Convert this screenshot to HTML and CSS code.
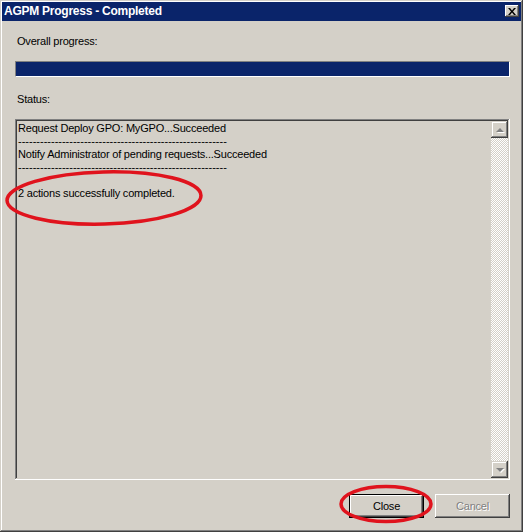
FILE: index.html
```html
<!DOCTYPE html>
<html lang="en">
<head>
    <meta charset="UTF-8">
    <title>AGPM Progress - Completed</title>
    <link rel="stylesheet" href="styles.css">
</head>
<body>
    <div class="window">
        <div class="titlebar">
            <span class="title">AGPM Progress - Completed</span>
            <button class="title-close" title="Close">
                <svg width="8" height="7" viewBox="0 0 8 7">
                    <path d="M0 0h2l2 2.5L6 0h2L5 3.5 8 7H6L4 4.5 2 7H0l3-3.5z" fill="#000"/>
                </svg>
            </button>
        </div>

        <div class="content">
            <div class="label">Overall progress:</div>
            <div class="progress">
                <div class="progress-fill" style="width: 100%"></div>
            </div>

            <div class="label status-label">Status:</div>
            <div class="status-box">
                <div class="status-text">
                    <div>Request Deploy GPO: MyGPO...Succeeded</div>
                    <div class="rule">---------------------------------------------------------</div>
                    <div>Notify Administrator of pending requests...Succeeded</div>
                    <div class="rule">---------------------------------------------------------</div>
                    <div>&nbsp;</div>
                    <div>2 actions successfully completed.</div>
                </div>
                <div class="scrollbar">
                    <div class="scroll-btn"><span class="arrow arrow-up"></span></div>
                    <div class="scroll-track"></div>
                    <div class="scroll-btn"><span class="arrow arrow-down"></span></div>
                </div>
            </div>

            <div class="buttons">
                <button class="btn btn-default">Close</button>
                <button class="btn" disabled>Cancel</button>
            </div>
        </div>

        <!-- red annotation marks drawn over the dialog -->
        <svg class="marks" width="523" height="532" viewBox="0 0 523 532">
            <ellipse cx="104" cy="198" rx="97" ry="26" transform="rotate(-1.5 104 198)"
                     fill="none" stroke="#e0131d" stroke-width="3.5"/>
            <ellipse cx="386" cy="504" rx="45" ry="17.5"
                     fill="none" stroke="#e0131d" stroke-width="3.5"/>
        </svg>
    </div>
</body>
</html>
```

FILE: styles.css
```css
body {
    margin: 0;
    padding: 0;
    font-family: 'Liberation Sans', Arial, sans-serif;
    font-size: 11px;
    line-height: 13px;
    letter-spacing: -0.2px;
    color: #000;
    background-color: #d4d0c8;
}

.window {
    position: relative;
    width: 523px;
    height: 532px;
    box-sizing: border-box;
    padding: 2px;
    display: flex;
    flex-direction: column;
    background-color: #d4d0c8;
    box-shadow: inset -1px -1px #404040, inset 1px 1px #d4d0c8,
                inset -2px -2px #808080, inset 2px 2px #fff;
}

.titlebar {
    height: 19px;
    display: flex;
    align-items: flex-start;
    justify-content: space-between;
    background-color: #0a246a;
    color: #fff;
    padding-left: 2px;
}

.title {
    font-weight: bold;
    font-size: 12px;
    line-height: 19px;
    letter-spacing: -0.25px;
}

.title-close {
    width: 14px;
    height: 12px;
    margin: 3px 2px 0 0;
    padding: 0;
    border: none;
    display: flex;
    align-items: center;
    justify-content: center;
    background-color: #d4d0c8;
    box-shadow: inset -1px -1px #404040, inset 1px 1px #fff,
                inset -2px -2px #808080;
}

.content {
    flex: 1;
    display: flex;
    flex-direction: column;
    padding: 0 11px 12px 13px;
}

.label {
    margin-top: 14px;
    padding-left: 2px;
}

.status-label {
    margin-top: 16px;
}

.progress {
    margin-top: 13px;
    height: 16px;
    box-sizing: border-box;
    border: 1px solid;
    border-color: #808080 #fff #fff #808080;
}

.progress-fill {
    height: 100%;
    background-color: #0a246a;
}

.status-box {
    flex: 1;
    margin-top: 13px;
    display: flex;
    padding: 2px;
    background-color: #d4d0c8;
    box-shadow: inset -1px -1px #fff, inset 1px 1px #808080,
                inset -2px -2px #d4d0c8, inset 2px 2px #404040;
}

.status-text {
    flex: 1;
    padding: 1px 1px 0;
    white-space: nowrap;
    overflow: hidden;
}

.rule {
    letter-spacing: 0;
}

.scrollbar {
    width: 17px;
    display: flex;
    flex-direction: column;
}

.scroll-btn {
    width: 17px;
    height: 17px;
    display: flex;
    align-items: center;
    justify-content: center;
    background-color: #d4d0c8;
    box-shadow: inset -1px -1px #404040, inset 1px 1px #d4d0c8,
                inset -2px -2px #808080, inset 2px 2px #fff;
}

.scroll-track {
    flex: 1;
    background-image: conic-gradient(#fff 25%, #d4d0c8 0 50%, #fff 0 75%, #d4d0c8 0);
    background-size: 2px 2px;
}

.arrow {
    width: 0;
    height: 0;
    border-left: 4px solid transparent;
    border-right: 4px solid transparent;
    filter: drop-shadow(1px 1px 0 #fff);
}

.arrow-up {
    border-bottom: 4px solid #808080;
}

.arrow-down {
    border-top: 4px solid #808080;
}

.buttons {
    margin-top: 14px;
    display: flex;
    justify-content: flex-end;
    gap: 11px;
}

.btn {
    width: 75px;
    height: 24px;
    padding: 0 0 1px;
    border: none;
    font-family: inherit;
    font-size: 11px;
    letter-spacing: -0.2px;
    color: #000;
    background-color: #d4d0c8;
    box-shadow: inset -1px -1px #404040, inset 1px 1px #fff,
                inset -2px -2px #808080, inset 2px 2px #d4d0c8;
}

.btn-default {
    border: 1px solid #000;
    box-shadow: inset -1px -1px #404040, inset 1px 1px #fff,
                inset -2px -2px #808080;
}

.btn:disabled {
    color: #808080;
    text-shadow: 1px 1px 0 #fff;
}

.marks {
    position: absolute;
    top: 0;
    left: 0;
    pointer-events: none;
}
```
